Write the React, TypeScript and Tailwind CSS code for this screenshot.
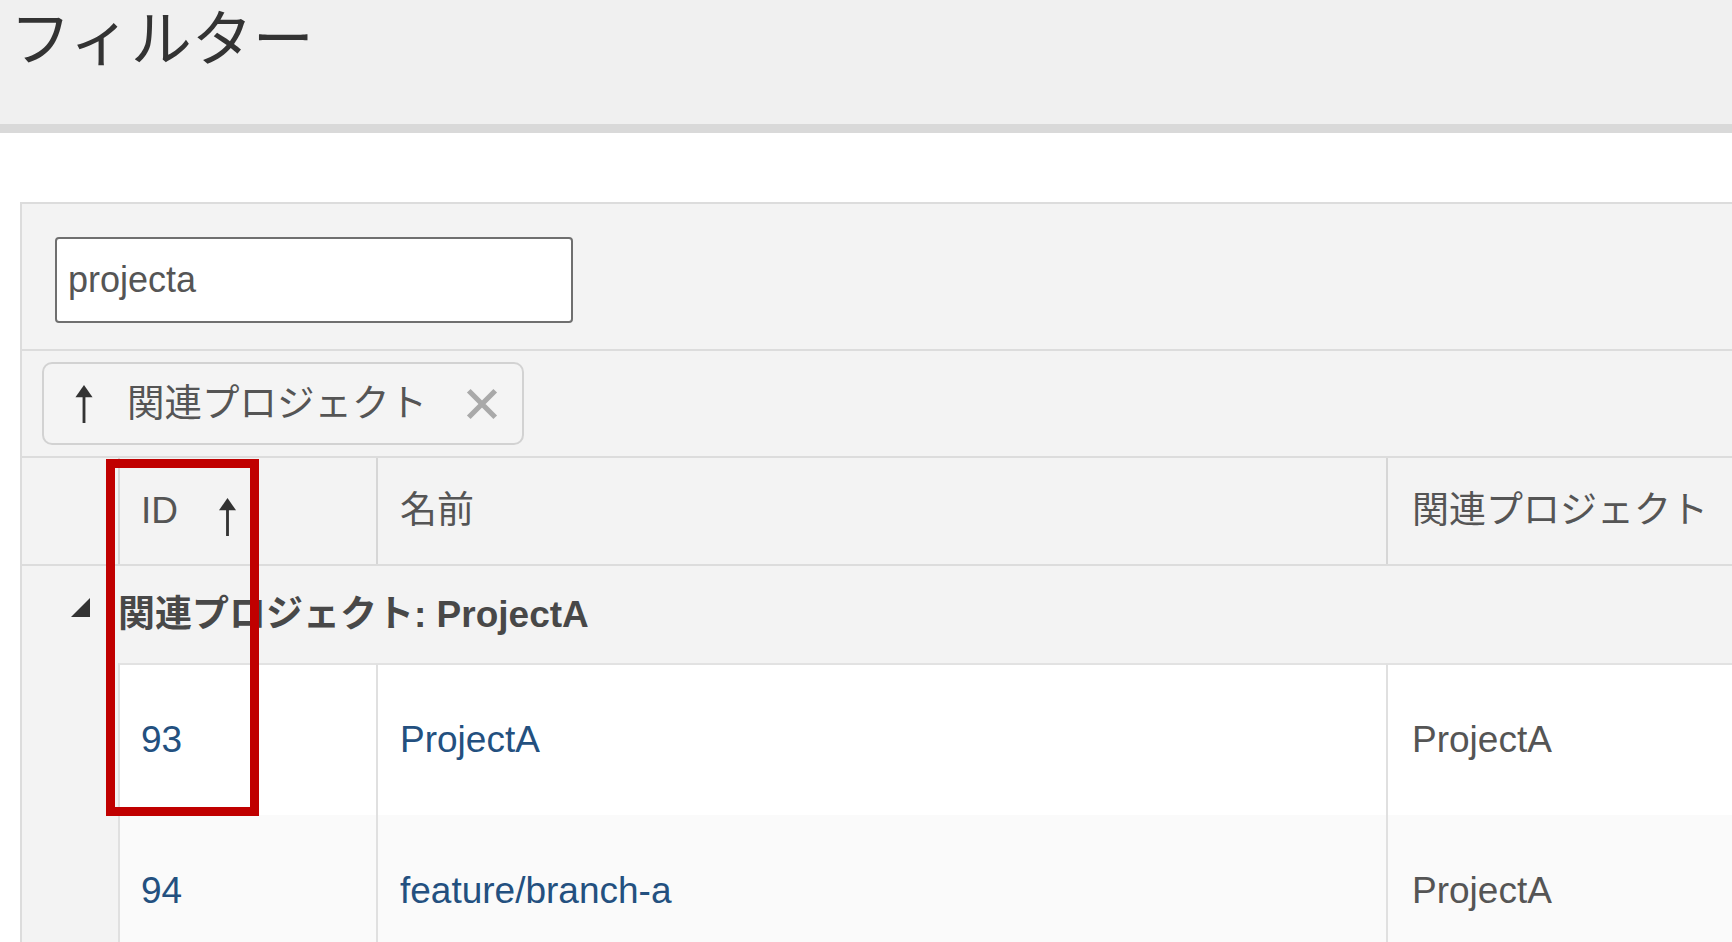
import * as React from 'react';

const jp = 'font-["Liberation_Sans","Noto_Sans_CJK_JP",sans-serif]';

function UpArrow({ className }: { className?: string }) {
  return (
    <svg viewBox="0 0 22 40" className={className} fill="none">
      <path d="M11 11 L11 40" stroke="currentColor" strokeWidth="3" />
      <path d="M11 0 L2 13 L20 13 Z" fill="currentColor" />
    </svg>
  );
}

const rows = [
  { id: '93', name: 'ProjectA', project: 'ProjectA', bg: 'bg-white', first: true },
  { id: '94', name: 'feature/branch-a', project: 'ProjectA', bg: 'bg-[#fafafa]', first: false },
];

export default function App() {
  return (
    <div className={`relative w-[1732px] h-[942px] overflow-hidden bg-white ${jp}`}>
      {/* Page title */}
      <div className="h-[124px] bg-[#f0f0f0] pl-[10px] pt-[10px]">
        <h1 className="text-[61px] leading-[61px] text-[#333] font-normal">フィルター</h1>
      </div>
      <div className="h-[9px] bg-[#d9d9d9]" />
      <div className="h-[69px]" />

      {/* Grid panel */}
      <div className="ml-[20px] border-l-2 border-t-2 border-[#dcdcdc] bg-[#f3f3f3]">
        {/* Toolbar with search */}
        <div className="h-[147px] pt-[33px] pl-[33px] border-b-2 border-[#dcdcdc]">
          <div className="w-[518px] h-[86px] bg-white border-2 border-[#6f6f6f] rounded-[4px] flex items-center pl-[11px]">
            <span className="text-[36px] text-[#555]">projecta</span>
          </div>
        </div>

        {/* Group panel */}
        <div className="h-[107px] pt-[11px] pl-[20px] border-b-2 border-[#dcdcdc]">
          <div className="w-[482px] h-[83px] border-2 border-[#d2d2d2] rounded-[10px] bg-[#f4f4f4] flex items-center">
            <UpArrow className="w-[22px] h-[38px] ml-[29px] text-[#333]" />
            <span className="ml-[32px] text-[37.5px] text-[#555] leading-none">関連プロジェクト</span>
            <svg viewBox="0 0 36 36" className="w-[34px] h-[34px] ml-[38px]">
              <path d="M4 4 L32 32 M32 4 L4 32" stroke="#a9a9a9" strokeWidth="5.5" />
            </svg>
          </div>
        </div>

        {/* Header row */}
        <div className="flex h-[108px] border-b-2 border-[#dcdcdc] text-[37px] text-[#555]">
          <div className="w-[96px] shrink-0" />
          <div className="w-[258px] shrink-0 border-l-2 border-[#d6d6d6] flex items-center pl-[21px]">
            <span>ID</span>
            <UpArrow className="w-[21px] h-[38px] ml-[39px] mt-[12px] text-[#333]" />
          </div>
          <div className="w-[1010px] shrink-0 border-l-2 border-[#d6d6d6] flex items-center pl-[22px]">
            <span>名前</span>
          </div>
          <div className="flex-1 border-l-2 border-[#d6d6d6] flex items-center pl-[24px]">
            <span className="whitespace-nowrap">関連プロジェクト</span>
          </div>
        </div>

        {/* Group header row */}
        <div className="flex items-center h-[97px]">
          <div className="w-[96px] shrink-0 flex justify-end pr-[28px]">
            <svg viewBox="0 0 20 20" className="w-[19px] h-[19px] mt-[-14px]">
              <path d="M20 0 L20 20 L0 20 Z" fill="#333" />
            </svg>
          </div>
          <span className="text-[37px] font-bold text-[#484848] whitespace-nowrap">関連プロジェクト: ProjectA</span>
        </div>

        {/* Data rows */}
        {rows.map((r) => {
          const cell = `border-l-2 border-[#e0e0e0] flex items-center ${r.first ? 'border-t-2 border-t-[#e2e2e2]' : ''} ${r.bg}`;
          return (
            <div key={r.id} className="flex h-[152px] text-[37px]">
              <div className="w-[96px] shrink-0" />
              <div className={`w-[258px] shrink-0 pl-[21px] text-[#23507f] ${cell}`}>{r.id}</div>
              <div className={`w-[1010px] shrink-0 pl-[22px] text-[#23507f] ${cell}`}>{r.name}</div>
              <div className={`flex-1 pl-[24px] text-[#555] ${cell}`}>{r.project}</div>
            </div>
          );
        })}
      </div>

      {/* Highlight box drawn over the ID column */}
      <div className="absolute left-[106px] top-[459px] w-[153px] h-[357px] border-[9px] border-[#c00000] pointer-events-none" />
    </div>
  );
}
